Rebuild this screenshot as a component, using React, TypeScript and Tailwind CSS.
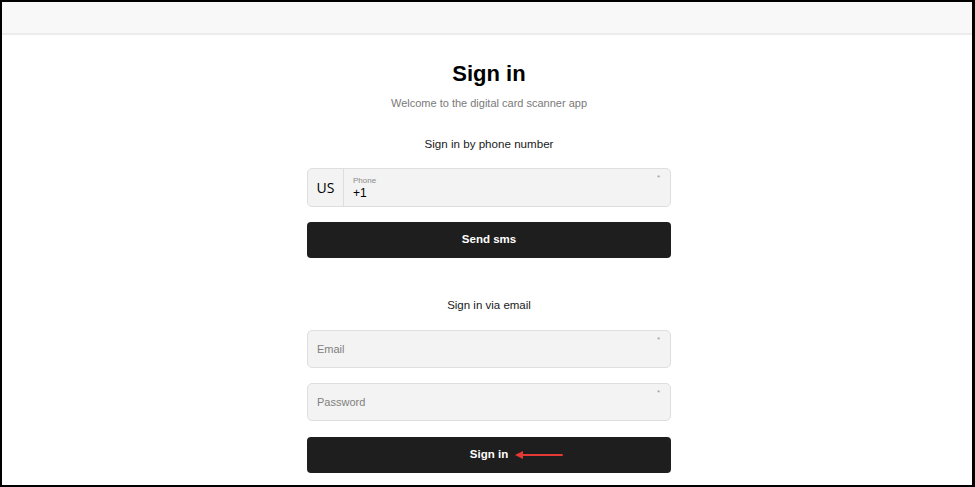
import { useState } from 'react'

function Field({ label, type = 'text' }: { label: string; type?: string }) {
    const [value, setValue] = useState('')
    return (
        <div className="relative h-[38px] w-full rounded-[5px] border border-[#dedede] bg-[#f3f3f3]">
            <input
                type={type}
                value={value}
                onChange={(e) => setValue(e.target.value)}
                placeholder={label}
                className="h-full w-full bg-transparent px-[9px] text-[11px] text-[#222] outline-none placeholder:text-[#808080]"
            />
            <span className="absolute right-[10px] top-[3px] text-[8px] text-[#999]">*</span>
        </div>
    )
}

function SignInForm() {
    return (
        <div className="flex w-[364px] flex-col items-center">
            <h1 className="mt-[24px] text-[22px] font-bold leading-[30px] text-black">Sign in</h1>
            <p className="mt-[7px] text-[11px] leading-[14px] text-[#7a7a7a]">
                Welcome to the digital card scanner app
            </p>
            <p className="mt-[26px] text-[11.6px] leading-[16px] text-[#1a1a1a]">Sign in by phone number</p>

            <div className="relative mt-[16px] flex h-[39px] w-full rounded-[5px] border border-[#dedede] bg-[#f3f3f3]">
                <div className="flex w-[36px] items-center justify-center border-r border-[#dedede] font-['Open_Sans',sans-serif] text-[14px] text-black">
                    US
                </div>
                <div className="flex flex-col justify-center pl-[9px]">
                    <span className="text-[8px] leading-[9px] text-[#8a8a8a]">Phone</span>
                    <span className="mt-[1px] text-[12px] leading-[14px] text-black">+1</span>
                </div>
                <span className="absolute right-[10px] top-[3px] text-[8px] text-[#999]">*</span>
            </div>

            <button className="mt-[15px] h-[36px] w-full rounded-[4px] bg-[#1e1e1e] text-[11.5px] font-bold text-white">
                Send sms
            </button>

            <p className="mt-[39px] text-[11.5px] leading-[16px] text-[#1a1a1a]">Sign in via email</p>

            <div className="mt-[17px] w-full">
                <Field label="Email" />
            </div>
            <div className="mt-[15px] w-full">
                <Field label="Password" type="password" />
            </div>

            <button className="relative mt-[16px] flex h-[36px] w-full items-center justify-center rounded-[4px] bg-[#1e1e1e] text-[11.5px] font-bold text-white">
                Sign in
                <svg
                    className="absolute left-[207px] top-[12px]"
                    width="50"
                    height="12"
                    viewBox="0 0 50 12"
                >
                    <line x1="6" y1="6" x2="48" y2="6" stroke="#e53935" strokeWidth="2" strokeLinecap="round" />
                    <path d="M1 6 L9 2 L9 10 Z" fill="#e53935" />
                </svg>
            </button>
        </div>
    )
}

export default function App() {
    return (
        <div className="h-[487px] w-[975px] overflow-hidden bg-black pb-[2px] pl-[2px] pr-[3px] pt-[2px] font-['Liberation_Sans',Arial,sans-serif]">
            <div className="flex h-full w-full flex-col bg-white">
                <header className="h-[33px] shrink-0 border-b-2 border-[#ececec] bg-[#f8f8f8]" />
                <main className="flex flex-1 justify-center pl-[4px]">
                    <SignInForm />
                </main>
            </div>
        </div>
    )
}
